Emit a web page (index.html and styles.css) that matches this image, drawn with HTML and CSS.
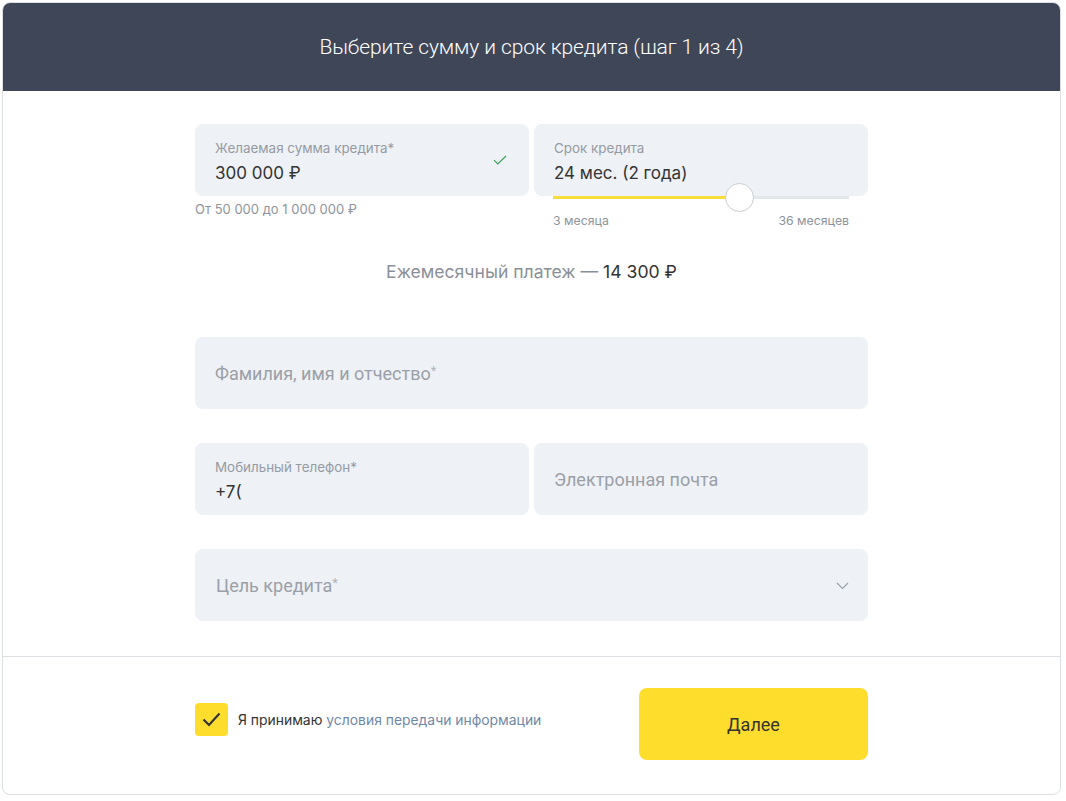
FILE: index.html
```html
<!DOCTYPE html>
<html lang="ru">
<head>
<meta charset="utf-8">
<title>Кредит</title>
<link rel="stylesheet" href="styles.css">
</head>
<body>
<div class="card">
  <header class="head">Выберите сумму и срок кредита (шаг 1 из 4)</header>
  <main class="body">
    <div class="form">
      <div class="row2">
        <div class="col">
          <div class="field filled">
            <div class="label">Желаемая сумма кредита*</div>
            <div class="value">300 000 ₽</div>
            <svg class="ok" width="14" height="10" viewBox="0 0 14 10"><path d="M1 5.2 L4.8 9 L13 1" fill="none" stroke="#3aa35a" stroke-width="1.2"/></svg>
          </div>
          <div class="hint">От 50 000 до 1 000 000 ₽</div>
        </div>
        <div class="col">
          <div class="field filled">
            <div class="label">Срок кредита</div>
            <div class="value">24 мес. (2 года)</div>
          </div>
          <div class="slider">
            <div class="track"><div class="fill" style="width:63%"></div></div>
            <div class="thumb" style="left:63%"></div>
          </div>
          <div class="range"><span>3 месяца</span><span>36 месяцев</span></div>
        </div>
      </div>
      <div class="payment">Ежемесячный платеж — <span class="sum">14 300 ₽</span></div>
      <div class="field ph name">Фамилия, имя и отчество<sup>*</sup></div>
      <div class="row2 gaprow">
        <div class="field filled">
          <div class="label">Мобильный телефон*</div>
          <div class="value">+7(</div>
        </div>
        <div class="field ph">Электронная почта</div>
      </div>
      <div class="field ph select">Цель кредита<sup>*</sup>
        <svg class="chev" width="13" height="8" viewBox="0 0 13 8"><path d="M1 1 L6.5 6.5 L12 1" fill="none" stroke="#9aa1ab" stroke-width="1.1"/></svg>
      </div>
    </div>
  </main>
  <footer class="foot">
    <div class="footin">
      <label class="agree">
        <span class="box"><svg width="19" height="15" viewBox="0 0 19 15"><path d="M1.5 7.5 L7 13 L17.5 1.5" fill="none" stroke="#333" stroke-width="2.2"/></svg></span>
        <span class="atext">Я принимаю <a href="#" class="link">условия передачи информации</a></span>
      </label>
      <button class="btn">Далее</button>
    </div>
  </footer>
</div>
</body>
</html>
```
FILE: styles.css
```css
* { box-sizing: border-box; }
html, body { margin: 0; padding: 0; background: #fff; }
body {
  padding: 2px 5px 6px 2px;
  font-family: Roboto, "Liberation Sans", Arial, sans-serif;
  color: #333;
}
.card {
  width: 1059px;
  height: 793px;
  border: 1px solid #dcdfe3;
  border-radius: 8px;
  overflow: hidden;
  display: flex;
  flex-direction: column;
}
.head {
  height: 89px;
  margin: -1px -1px 0;
  background: #3e4657;
  color: #fff;
  font-size: 21px;
  font-weight: 300;
  display: flex;
  align-items: center;
  justify-content: center;
  letter-spacing: -0.1px;
}
.body {
  padding: 33px 0 0;
  height: 566px;
  border-bottom: 1px solid #dcdfe3;
}
.form {
  width: 673px;
  margin: 0 auto;
}
.row2 {
  display: grid;
  grid-template-columns: 1fr 1fr;
  gap: 5px;
}
.col { position: relative; }
.field {
  position: relative;
  height: 72px;
  background: #eef1f5;
  border-radius: 8px;
  padding: 0 20px;
}
.field.filled { padding-top: 15px; }
.label {
  font-family: Inter, Roboto, sans-serif;
  font-size: 13.4px;
  line-height: 18px;
  color: #959ba4;
}
.value {
  font-family: Inter, Roboto, sans-serif;
  font-size: 17px;
  line-height: 22px;
  margin-top: 5px;
  color: #333;
}
.ok { position: absolute; right: 22px; top: 31px; }
.hint {
  margin-top: 5px;
  font-family: Inter, Roboto, sans-serif;
  font-size: 13px;
  line-height: 16px;
  color: #8e949c;
}
.slider {
  position: relative;
  margin: 0 19px;
  height: 3px;
}
.track {
  height: 3px;
  background: #e3e6ea;
}
.fill { height: 3px; background: #f8dc3c; }
.thumb {
  position: absolute;
  top: -13px;
  width: 29px;
  height: 29px;
  margin-left: -14px;
  border-radius: 50%;
  background: #fff;
  border: 1px solid #c9cdd2;
}
.range {
  display: flex;
  justify-content: space-between;
  margin: 14px 19px 0;
  font-family: Inter, Roboto, sans-serif;
  font-size: 12.3px;
  line-height: 16px;
  color: #8e949c;
}
.payment {
  margin-top: 31px;
  text-align: center;
  font-family: Inter, Roboto, sans-serif;
  font-size: 17.6px;
  line-height: 24px;
  color: #8a9099;
}
.payment .sum { color: #333; }
.ph {
  display: flex;
  align-items: center;
  font-size: 18px;
  color: #9aa0a8;
}
.ph sup { font-size: 13px; align-self: flex-start; margin-top: 26px; color: #b0b5bc; }
.name { margin-top: 53px; }
.gaprow { margin-top: 34px; }
.select { margin-top: 34px; padding-left: 21px; }
.chev { position: absolute; right: 19px; top: 33px; }
.foot {
  flex: 1;
  padding-top: 31px;
}
.footin {
  width: 673px;
  margin: 0 auto;
  display: flex;
  align-items: flex-start;
  justify-content: space-between;
}
.agree {
  display: flex;
  align-items: center;
  gap: 10px;
  margin-top: 15px;
}
.box {
  width: 33px;
  height: 33px;
  border-radius: 4px;
  background: #ffdd2d;
  display: flex;
  align-items: center;
  justify-content: center;
}
.atext { font-family: Inter, Roboto, sans-serif; font-size: 13.9px; color: #333; }
.link { color: #6f88a7; text-decoration: none; }
.btn {
  width: 229px;
  height: 72px;
  border: none;
  border-radius: 8px;
  background: #ffdd2d;
  font-family: inherit;
  font-size: 18px;
  color: #333;
}
```
